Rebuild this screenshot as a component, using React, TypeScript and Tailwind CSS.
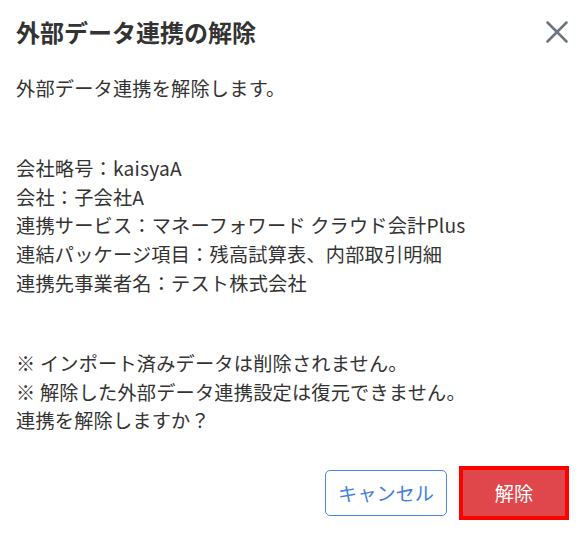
import React from 'react';

const details = [
  '会社略号：kaisyaA',
  '会社：子会社A',
  '連携サービス：マネーフォワード クラウド会計Plus',
  '連結パッケージ項目：残高試算表、内部取引明細',
  '連携先事業者名：テスト株式会社',
];

const notes = [
  '※ インポート済みデータは削除されません。',
  '※ 解除した外部データ連携設定は復元できません。',
  '連携を解除しますか？',
];

export default function App() {
  return (
    <div className="w-[587px] h-[533px] bg-white text-[#333333] font-['Noto_Sans_CJK_JP','Noto_Sans',sans-serif] overflow-hidden">
      <div className="flex items-center justify-between pt-4 pl-4 pr-[19px]">
        <h2 className="text-[24px] leading-[32px] font-bold">外部データ連携の解除</h2>
        <button className="flex items-center justify-center" aria-label="閉じる">
          <svg width="22" height="22" viewBox="0 0 22 22" fill="none">
            <path d="M1.5 1.5 20.5 20.5M20.5 1.5 1.5 20.5" stroke="#6b7280" strokeWidth="2.5" strokeLinecap="round" />
          </svg>
        </button>
      </div>

      <div className="mt-[26px] pl-4 pr-[22px] flex flex-col gap-[51px] text-[19.2px] leading-[28.8px] tracking-[0.2px]">
        <p>外部データ連携を解除します。</p>
        <div>
          {details.map((line) => (
            <p key={line}>{line}</p>
          ))}
        </div>
        <div>
          {notes.map((line) => (
            <p key={line}>{line}</p>
          ))}
        </div>
      </div>

      <div className="mt-[35px] flex justify-end gap-4 pr-[22px]">
        <button className="w-[122px] h-[46px] rounded-[5px] border border-[#4a87e6] bg-white text-[#3f7fe0] text-[19.2px] flex items-center justify-center">
          キャンセル
        </button>
        <button className="w-[102px] h-[46px] bg-[#e0474c] text-white text-[19.2px] flex items-center justify-center outline-4 outline-[#ff0000]">
          解除
        </button>
      </div>
    </div>
  );
}
